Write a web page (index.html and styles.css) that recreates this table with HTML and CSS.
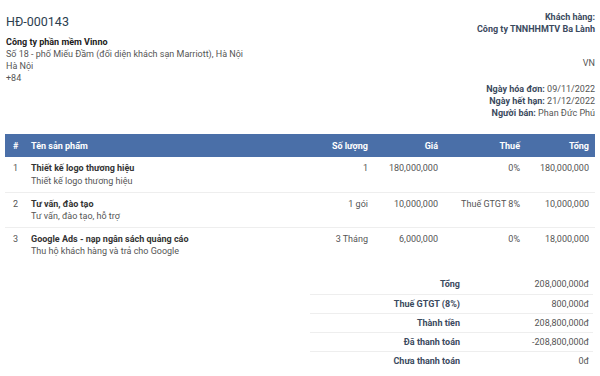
FILE: index.html
```html
<!DOCTYPE html>
<html lang="vi">
<head>
<meta charset="utf-8">
<link rel="stylesheet" href="styles.css">
</head>
<body>
<div class="page">
  <div class="top">
    <div class="seller">
      <h1 class="code">HĐ-000143</h1>
      <div class="name">Công ty phần mềm Vinno</div>
      <div class="line">Số 18 - phố Miếu Đầm (đối diện khách sạn Marriott), Hà Nội</div>
      <div class="line">Hà Nội</div>
      <div class="line">+84</div>
    </div>
    <div class="buyer">
      <div class="label">Khách hàng:</div>
      <div class="label">Công ty TNNHHMTV Ba Lành</div>
      <div class="country">VN</div>
      <div class="meta">
        <div><span class="mk">Ngày hóa đơn:</span> 09/11/2022</div>
        <div><span class="mk">Ngày hết hạn:</span> 21/12/2022</div>
        <div><span class="mk">Người bán:</span> Phan Đức Phú</div>
      </div>
    </div>
  </div>
  <table class="items">
    <thead>
      <tr>
        <th class="c-no">#</th>
        <th class="c-name">Tên sản phẩm</th>
        <th class="c-qty">Số lượng</th>
        <th class="c-price">Giá</th>
        <th class="c-tax">Thuế</th>
        <th class="c-total">Tổng</th>
      </tr>
    </thead>
    <tbody>
      <tr>
        <td class="c-no">1</td>
        <td class="c-name"><div class="pn">Thiết kế logo thương hiệu</div><div class="pd">Thiết kế logo thương hiệu</div></td>
        <td class="c-qty">1</td>
        <td class="c-price">180,000,000</td>
        <td class="c-tax">0%</td>
        <td class="c-total">180,000,000</td>
      </tr>
      <tr>
        <td class="c-no">2</td>
        <td class="c-name"><div class="pn">Tư vấn, đào tạo</div><div class="pd">Tư vấn, đào tạo, hỗ trợ</div></td>
        <td class="c-qty">1 gói</td>
        <td class="c-price">10,000,000</td>
        <td class="c-tax">Thuế GTGT 8%</td>
        <td class="c-total">10,000,000</td>
      </tr>
      <tr>
        <td class="c-no">3</td>
        <td class="c-name"><div class="pn">Google Ads - nạp ngân sách quảng cáo</div><div class="pd">Thu hộ khách hàng và trả cho Google</div></td>
        <td class="c-qty">3 Tháng</td>
        <td class="c-price">6,000,000</td>
        <td class="c-tax">0%</td>
        <td class="c-total">18,000,000</td>
      </tr>
    </tbody>
  </table>
  <div class="sum-wrap">
    <table class="summary">
      <tr><th>Tổng</th><td>208,000,000đ</td></tr>
      <tr><th>Thuế GTGT (8%)</th><td>800,000đ</td></tr>
      <tr><th>Thành tiền</th><td>208,800,000đ</td></tr>
      <tr><th>Đã thanh toán</th><td>-208,800,000đ</td></tr>
      <tr><th>Chưa thanh toán</th><td>0đ</td></tr>
    </table>
  </div>
</div>
</body>
</html>
```

FILE: styles.css
```css
* { box-sizing: border-box; }
html, body { margin: 0; padding: 0; background: #fff; }
body {
  font-family: Roboto, "Noto Sans", sans-serif;
  font-size: 9px;
  color: #555;
  line-height: 12px;
}
.page { padding: 10px 5px 0 5px; }
.top { display: flex; justify-content: space-between; align-items: flex-start; }
.seller { padding-left: 1px; padding-top: 3px; }
.code {
  margin: 0 0 5px 0;
  font-size: 12.5px;
  line-height: 18px;
  font-weight: 400;
  color: #2c3e50;
}
.name { font-weight: 700; color: #222; }
.line { color: #555; }
.buyer { text-align: right; padding-top: 1px; }
.label { font-weight: 700; color: #3b4a5e; }
.country { margin-top: 22px; color: #555; }
.meta { margin-top: 14px; }
.mk { font-weight: 700; color: #3b4a5e; }
.items {
  width: 100%;
  margin-top: 15px;
  border-collapse: collapse;
}
.items th {
  background: #4a6fa8;
  color: #fff;
  font-weight: 700;
  height: 23px;
  padding: 0 6px;
  vertical-align: middle;
}
.items td {
  padding: 5px 6px 3px 6px;
  vertical-align: top;
  height: 35px;
  line-height: 12.5px;
  border-bottom: 1px solid #eee;
}
.items tbody tr:last-child td { border-bottom: none; }
.items .c-no { text-align: left; width: 20px; padding-left: 8px; }
.items .c-name { text-align: left; }
.items .c-qty { text-align: right; width: 80px; }
.items .c-price { text-align: right; width: 70px; }
.items .c-tax { text-align: right; width: 82px; }
.items .c-total { text-align: right; width: 69px; }
.pn { font-weight: 700; color: #333; }
.pd { color: #555; }
.sum-wrap { display: flex; justify-content: flex-end; margin-top: 13px; }
.summary { width: 283px; border-collapse: collapse; margin-right: 2px; }
.summary th, .summary td {
  height: 19px;
  padding: 0 6px;
  text-align: right;
  border-bottom: 1px solid #eee;
}
.summary tr:last-child th, .summary tr:last-child td { border-bottom: none; }
.summary th { font-weight: 700; color: #3b4a5e; width: 156px; }
.summary td { color: #555; padding-right: 4px; }
```
